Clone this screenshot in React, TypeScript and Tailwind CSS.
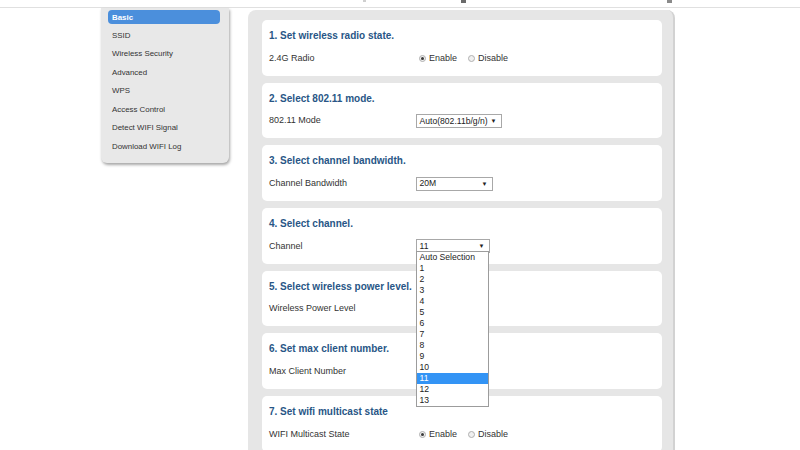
import React from "react";

const MENU = [
  "Basic",
  "SSID",
  "Wireless Security",
  "Advanced",
  "WPS",
  "Access Control",
  "Detect WIFI Signal",
  "Download WIFI Log",
];

const CHANNELS = ["Auto Selection", "1", "2", "3", "4", "5", "6", "7", "8", "9", "10", "11", "12", "13"];

function Radio({ checked }: { checked?: boolean }) {
  return (
    <span className="w-[7px] h-[7px] rounded-full border border-[#b0b0b0] bg-[#f0f0f0] flex items-center justify-center shrink-0">
      {checked && <span className="w-[3px] h-[3px] rounded-full bg-[#3a3a3a]" />}
    </span>
  );
}

function RadioPair() {
  return (
    <div className="flex items-center text-[9px] text-[#333] ml-[3.5px]">
      <Radio checked />
      <span className="ml-[3px]">Enable</span>
      <span className="ml-[10.5px]">
        <Radio />
      </span>
      <span className="ml-[3.5px]">Disable</span>
    </div>
  );
}

function Select({ value, width }: { value: string; width: string }) {
  return (
    <div className={`${width} h-[14px] border border-[#a8a8a8] bg-white flex items-center justify-between pl-[3px] pr-[4px] text-[8.6px] text-[#222]`}>
      <span>{value}</span>
      <span className="text-[6px] leading-none">▼</span>
    </div>
  );
}

function Card({ title, label, children }: { title: string; label: string; children?: React.ReactNode }) {
  return (
    <div className="h-[55.67px] bg-white rounded-[5px] pl-[7px] pt-[10px] shrink-0">
      <div className="h-[12px] leading-[12px] text-[10px] font-bold text-[#285686]">{title}</div>
      <div className="flex items-center h-[14px] mt-[9.5px]">
        <div className="w-[146.5px] text-[9px] text-[#333]">{label}</div>
        {children}
      </div>
    </div>
  );
}

export default function App() {
  return (
    <div className="w-[800px] h-[450px] overflow-hidden bg-white font-['Liberation_Sans',Arial,sans-serif]">
      {/* top strip */}
      <div className="h-[8px] border-b border-[#e0e0e0] flex items-start">
        <div className="ml-[363px] w-[3px] h-[2px] bg-[#cfcfcf]" />
        <div className="ml-[95px] w-[5px] h-[3px] bg-[#6a6a6a]" />
        <div className="ml-[201px] w-[5px] h-[3px] bg-[#8a8a8a]" />
      </div>

      <div className="flex items-start">
        {/* sidebar */}
        <div className="ml-[101px] w-[128px] bg-[#e8e8e8] rounded-b-[6px] shadow-[1px_2px_3px_rgba(0,0,0,0.35)] px-[7px] pt-[2px] pb-[10px] flex flex-col gap-[4.43px]">
          {MENU.map((m, i) => (
            <div
              key={m}
              className={`h-[14px] w-[112px] rounded-[4px] flex items-center pl-[4px] pt-[1px] text-[7.9px] ${
                i === 0 ? "bg-[#4b8fdc] text-white font-bold" : "text-[#333]"
              }`}
            >
              {m}
            </div>
          ))}
        </div>

        {/* main panel */}
        <div className="ml-[19px] mt-[2px] w-[427px] h-[450px] bg-[#e6e6e6] rounded-t-[8px] border-r-2 border-[#d2d2d2] pl-[14px] pr-[11px] pt-[10px] flex flex-col gap-[7px]">
          <Card title="1. Set wireless radio state." label="2.4G Radio">
            <RadioPair />
          </Card>
          <Card title="2. Select 802.11 mode." label="802.11 Mode">
            <Select value="Auto(802.11b/g/n)" width="w-[86px]" />
          </Card>
          <Card title="3. Select channel bandwidth." label="Channel Bandwidth">
            <Select value="20M" width="w-[77px]" />
          </Card>
          <div className="relative z-10 shrink-0">
            <Card title="4. Select channel." label="Channel">
              <div className="relative">
                <Select value="11" width="w-[74px]" />
                <div className="absolute top-[12px] left-0 w-[73px] border border-[#9c9c9c] bg-white">
                  {CHANNELS.map((c) => (
                    <div
                      key={c}
                      className={`h-[11px] leading-[11px] pl-[3px] text-[8.6px] ${
                        c === "11" ? "bg-[#3394f5] text-white" : "text-[#222]"
                      }`}
                    >
                      {c}
                    </div>
                  ))}
                </div>
              </div>
            </Card>
          </div>
          <Card title="5. Select wireless power level." label="Wireless Power Level" />
          <Card title="6. Set max client number." label="Max Client Number" />
          <Card title="7. Set wifi multicast state" label="WIFI Multicast State">
            <RadioPair />
          </Card>
        </div>
      </div>
    </div>
  );
}
